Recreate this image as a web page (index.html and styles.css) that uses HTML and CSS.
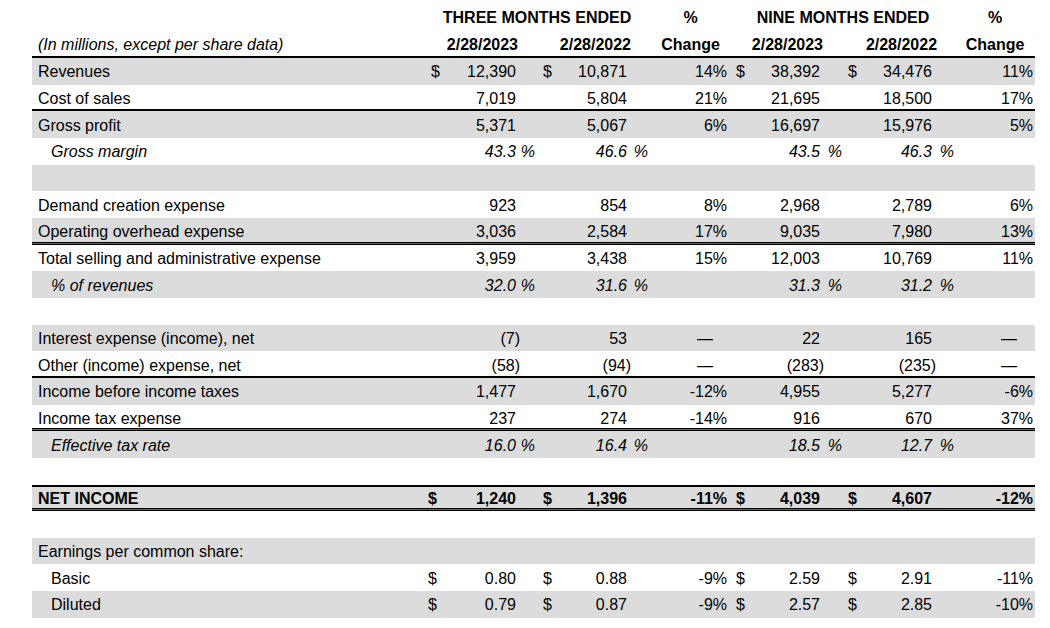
FILE: index.html
```html
<!DOCTYPE html>
<html lang="en">
<head>
<meta charset="utf-8">
<title>Income statement</title>
<link rel="stylesheet" href="styles.css">
</head>
<body>
<table class="fin">
  <colgroup>
    <col class="c-label"><col class="c-d1"><col class="c-v1"><col class="c-s1">
    <col class="c-d2"><col class="c-v2"><col class="c-s2"><col class="c-ch1">
    <col class="c-d3"><col class="c-v3"><col class="c-s3">
    <col class="c-d4"><col class="c-v4"><col class="c-s4"><col class="c-ch2">
  </colgroup>
  <thead>
    <tr class="h1">
      <th></th>
      <th colspan="6" class="ctr">THREE MONTHS ENDED</th>
      <th class="ctr">%</th>
      <th colspan="6" class="ctr">NINE MONTHS ENDED</th>
      <th class="ctr">%</th>
    </tr>
    <tr class="h2">
      <th class="units">(In millions, except per share data)</th>
      <th colspan="3" class="dt">2/28/2023</th>
      <th colspan="3" class="dt">2/28/2022</th>
      <th class="ctr">Change</th>
      <th colspan="3" class="dt">2/28/2023</th>
      <th colspan="3" class="dt dt4">2/28/2022</th>
      <th class="ctr">Change</th>
    </tr>
  </thead>
  <tbody>
    <tr>
      <td class="lbl">Revenues</td>
      <td class="d d1">$</td><td class="v">12,390</td><td class="s"></td>
      <td class="d d2">$</td><td class="v">10,871</td><td class="s"></td>
      <td class="ch">14%</td>
      <td class="d d3">$</td><td class="v">38,392</td><td class="s"></td>
      <td class="d d4">$</td><td class="v">34,476</td><td class="s"></td>
      <td class="ch ch2">11%</td>
    </tr>
    <tr class="line">
      <td class="lbl">Cost of sales</td>
      <td class="d"></td><td class="v">7,019</td><td class="s"></td>
      <td class="d"></td><td class="v">5,804</td><td class="s"></td>
      <td class="ch">21%</td>
      <td class="d"></td><td class="v">21,695</td><td class="s"></td>
      <td class="d"></td><td class="v">18,500</td><td class="s"></td>
      <td class="ch ch2">17%</td>
    </tr>
    <tr>
      <td class="lbl">Gross profit</td>
      <td class="d"></td><td class="v">5,371</td><td class="s"></td>
      <td class="d"></td><td class="v">5,067</td><td class="s"></td>
      <td class="ch">6%</td>
      <td class="d"></td><td class="v">16,697</td><td class="s"></td>
      <td class="d"></td><td class="v">15,976</td><td class="s"></td>
      <td class="ch ch2">5%</td>
    </tr>
    <tr class="it">
      <td class="lbl ind">Gross margin</td>
      <td class="d"></td><td class="v">43.3</td><td class="s s1">%</td>
      <td class="d"></td><td class="v">46.6</td><td class="s s2">%</td>
      <td class="ch"></td>
      <td class="d"></td><td class="v">43.5</td><td class="s s3">%</td>
      <td class="d"></td><td class="v">46.3</td><td class="s s4">%</td>
      <td class="ch ch2"></td>
    </tr>
    <tr class="blank"><td colspan="15"></td></tr>
    <tr>
      <td class="lbl">Demand creation expense</td>
      <td class="d"></td><td class="v">923</td><td class="s"></td>
      <td class="d"></td><td class="v">854</td><td class="s"></td>
      <td class="ch">8%</td>
      <td class="d"></td><td class="v">2,968</td><td class="s"></td>
      <td class="d"></td><td class="v">2,789</td><td class="s"></td>
      <td class="ch ch2">6%</td>
    </tr>
    <tr class="dbl">
      <td class="lbl">Operating overhead expense</td>
      <td class="d"></td><td class="v">3,036</td><td class="s"></td>
      <td class="d"></td><td class="v">2,584</td><td class="s"></td>
      <td class="ch">17%</td>
      <td class="d"></td><td class="v">9,035</td><td class="s"></td>
      <td class="d"></td><td class="v">7,980</td><td class="s"></td>
      <td class="ch ch2">13%</td>
    </tr>
    <tr>
      <td class="lbl">Total selling and administrative expense</td>
      <td class="d"></td><td class="v">3,959</td><td class="s"></td>
      <td class="d"></td><td class="v">3,438</td><td class="s"></td>
      <td class="ch">15%</td>
      <td class="d"></td><td class="v">12,003</td><td class="s"></td>
      <td class="d"></td><td class="v">10,769</td><td class="s"></td>
      <td class="ch ch2">11%</td>
    </tr>
    <tr class="it">
      <td class="lbl ind">% of revenues</td>
      <td class="d"></td><td class="v">32.0</td><td class="s s1">%</td>
      <td class="d"></td><td class="v">31.6</td><td class="s s2">%</td>
      <td class="ch"></td>
      <td class="d"></td><td class="v">31.3</td><td class="s s3">%</td>
      <td class="d"></td><td class="v">31.2</td><td class="s s4">%</td>
      <td class="ch ch2"></td>
    </tr>
    <tr class="blank"><td colspan="15"></td></tr>
    <tr>
      <td class="lbl">Interest expense (income), net</td>
      <td class="d"></td><td class="v"><span class="neg">(7)</span></td><td class="s"></td>
      <td class="d"></td><td class="v">53</td><td class="s"></td>
      <td class="ch dash">—</td>
      <td class="d"></td><td class="v">22</td><td class="s"></td>
      <td class="d"></td><td class="v">165</td><td class="s"></td>
      <td class="ch ch2 dash">—</td>
    </tr>
    <tr class="line">
      <td class="lbl">Other (income) expense, net</td>
      <td class="d"></td><td class="v"><span class="neg">(58)</span></td><td class="s"></td>
      <td class="d"></td><td class="v"><span class="neg">(94)</span></td><td class="s"></td>
      <td class="ch dash">—</td>
      <td class="d"></td><td class="v"><span class="neg">(283)</span></td><td class="s"></td>
      <td class="d"></td><td class="v"><span class="neg">(235)</span></td><td class="s"></td>
      <td class="ch ch2 dash">—</td>
    </tr>
    <tr>
      <td class="lbl">Income before income taxes</td>
      <td class="d"></td><td class="v">1,477</td><td class="s"></td>
      <td class="d"></td><td class="v">1,670</td><td class="s"></td>
      <td class="ch">-12%</td>
      <td class="d"></td><td class="v">4,955</td><td class="s"></td>
      <td class="d"></td><td class="v">5,277</td><td class="s"></td>
      <td class="ch ch2">-6%</td>
    </tr>
    <tr class="dbl">
      <td class="lbl">Income tax expense</td>
      <td class="d"></td><td class="v">237</td><td class="s"></td>
      <td class="d"></td><td class="v">274</td><td class="s"></td>
      <td class="ch">-14%</td>
      <td class="d"></td><td class="v">916</td><td class="s"></td>
      <td class="d"></td><td class="v">670</td><td class="s"></td>
      <td class="ch ch2">37%</td>
    </tr>
    <tr class="it">
      <td class="lbl ind">Effective tax rate</td>
      <td class="d"></td><td class="v">16.0</td><td class="s s1">%</td>
      <td class="d"></td><td class="v">16.4</td><td class="s s2">%</td>
      <td class="ch"></td>
      <td class="d"></td><td class="v">18.5</td><td class="s s3">%</td>
      <td class="d"></td><td class="v">12.7</td><td class="s s4">%</td>
      <td class="ch ch2"></td>
    </tr>
    <tr class="blank"><td colspan="15"></td></tr>
    <tr class="net">
      <td class="lbl">NET INCOME</td>
      <td class="d d1 eps">$</td><td class="v">1,240</td><td class="s"></td>
      <td class="d d2">$</td><td class="v">1,396</td><td class="s"></td>
      <td class="ch">-11%</td>
      <td class="d d3">$</td><td class="v">4,039</td><td class="s"></td>
      <td class="d d4">$</td><td class="v">4,607</td><td class="s"></td>
      <td class="ch ch2">-12%</td>
    </tr>
    <tr class="blank"><td colspan="15"></td></tr>
    <tr>
      <td class="lbl" colspan="15">Earnings per common share:</td>
    </tr>
    <tr>
      <td class="lbl ind">Basic</td>
      <td class="d d1 eps">$</td><td class="v">0.80</td><td class="s"></td>
      <td class="d d2">$</td><td class="v">0.88</td><td class="s"></td>
      <td class="ch">-9%</td>
      <td class="d d3">$</td><td class="v">2.59</td><td class="s"></td>
      <td class="d d4">$</td><td class="v">2.91</td><td class="s"></td>
      <td class="ch ch2">-11%</td>
    </tr>
    <tr>
      <td class="lbl ind">Diluted</td>
      <td class="d d1 eps">$</td><td class="v">0.79</td><td class="s"></td>
      <td class="d d2">$</td><td class="v">0.87</td><td class="s"></td>
      <td class="ch">-9%</td>
      <td class="d d3">$</td><td class="v">2.57</td><td class="s"></td>
      <td class="d d4">$</td><td class="v">2.85</td><td class="s"></td>
      <td class="ch ch2">-10%</td>
    </tr>
  </tbody>
</table>
</body>
</html>
```

FILE: styles.css
```css
html, body {
  margin: 0;
  padding: 0;
  background: #ffffff;
}

body {
  font-family: "Liberation Sans", Arial, sans-serif;
  font-size: 16px;
  color: #000000;
}

.fin {
  margin: 5px 0 0 32px;
  width: 1003px;
  table-layout: fixed;
  border-collapse: separate;
  border-spacing: 0;
}

.c-label { width: 392px; }
.c-d1 { width: 16px; }
.c-v1 { width: 76px; }
.c-s1 { width: 21px; }
.c-d2 { width: 19px; }
.c-v2 { width: 71px; }
.c-s2 { width: 23px; }
.c-ch1 { width: 81px; }
.c-d3 { width: 19px; }
.c-v3 { width: 70px; }
.c-s3 { width: 22px; }
.c-d4 { width: 20px; }
.c-v4 { width: 70px; }
.c-s4 { width: 23px; }
.c-ch2 { width: 80px; }

:where(.fin) th,
:where(.fin) td {
  padding: 0;
  white-space: nowrap;
  vertical-align: middle;
  overflow: visible;
  font-weight: normal;
}

:where(.fin) td {
  padding-top: 2px;
}

:where(.fin) th {
  font-weight: bold;
}

.h1 { height: 27px; }
.h2 { height: 26px; }

.h1 th {
  padding-bottom: 1px;
}

.h2 th {
  box-shadow: inset 0 -2px 0 #000000;
}

.ctr { text-align: center; }

.units {
  text-align: left;
  font-weight: normal;
  font-style: italic;
  padding-left: 6px;
}

.dt {
  text-align: right;
  padding-right: 19px;
}

.dt.dt4 { padding-right: 18px; }

.fin tbody tr {
  height: 26.667px;
}

.fin tbody tr:nth-child(odd) {
  background: #dcdcdc;
}

.lbl {
  text-align: left;
  padding-left: 6px;
}

.lbl.ind { padding-left: 19px; }

.d { text-align: left; }
.d1 { padding-left: 7px; }
.d1.eps { padding-left: 4px; }
.d2 { padding-left: 6px; }
.d3 { padding-left: 5px; }
.d4 { padding-left: 6px; }

.v { text-align: right; }

.neg { margin-right: -4px; }

.s { text-align: right; }
.s1 { padding-right: 2px; }
.s2 { padding-right: 2px; }
.s3 { padding-right: 0; }
.s4 { padding-right: 1px; }

.ch {
  text-align: right;
  padding-right: 4px;
}

.ch.ch2 { padding-right: 2px; }

.ch.dash { padding-right: 18px; }

.it td { font-style: italic; }

.line td {
  box-shadow: inset 0 -2px 0 #000000;
}

.dbl td {
  box-shadow: inset 0 -1px 0 #000000, inset 0 -2px 0 #666666, inset 0 -3px 0 #000000;
}

.net td {
  font-weight: bold;
  box-shadow: inset 0 2px 0 #000000, inset 0 -1px 0 #000000, inset 0 -2px 0 #666666, inset 0 -3px 0 #000000;
}
```
